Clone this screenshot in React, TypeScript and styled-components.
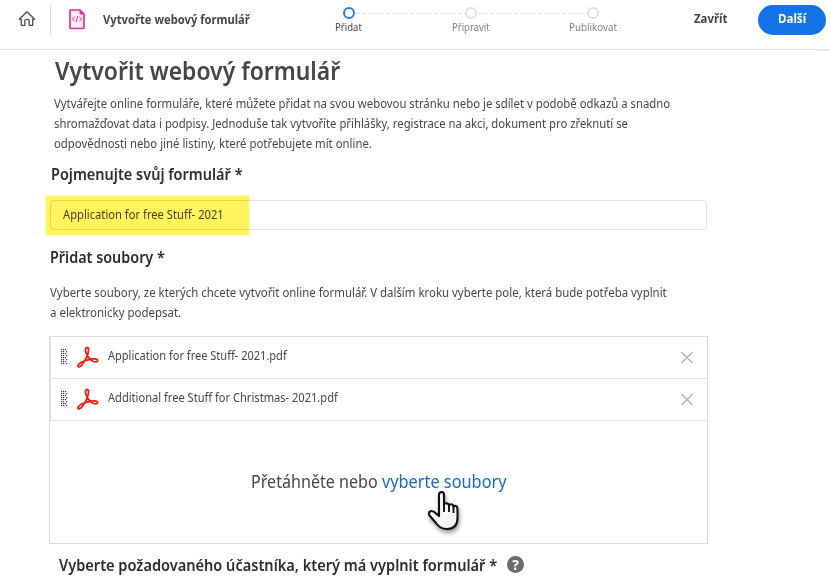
import React, { useLayoutEffect, useRef, useState } from "react";
import styled, { createGlobalStyle } from "styled-components";

const Global = createGlobalStyle`
  * { box-sizing: border-box; }
  html, body { margin: 0; background: #fff; overflow: hidden; }
  body { font-family: "Noto Sans", "Open Sans", sans-serif; color: #464646; font-size: 13.4px; }
  h1, h2, p { margin: 0; }
`;

const FitBox = styled.span<{ $w: number }>`
  display: inline-block;
  width: ${(p) => p.$w}px;
  white-space: nowrap;
  vertical-align: top;
`;
const FitInner = styled.span`
  display: inline-block;
  transform-origin: 0 50%;
  vertical-align: top;
`;

/* Condenses a run of text horizontally so that it fills the given width. */
function Fit({ w, children }: { w: number; children: React.ReactNode }) {
  const ref = useRef<HTMLSpanElement>(null);
  const [scale, setScale] = useState(1);
  useLayoutEffect(() => {
    if (ref.current) setScale(w / ref.current.offsetWidth);
  }, [w]);
  return (
    <FitBox $w={w}>
      <FitInner ref={ref} style={{ transform: `scaleX(${scale})` }}>{children}</FitInner>
    </FitBox>
  );
}

const Page = styled.div`
  width: 830px;
  height: 578px;
  overflow: hidden;
`;
const Header = styled.header`
  position: relative;
  display: flex;
  height: 50px;
  border-bottom: 1px solid #e6e6e6;
`;
const HeaderEdge = styled.i`
  position: absolute;
  right: 0;
  bottom: -2px;
  width: 13px;
  height: 1px;
  background: #e6e6e6;
`;
const HomeButton = styled.div`
  width: 51px;
  height: 30px;
  margin-top: 5px;
  padding: 5px 0 0 18px;
  border-right: 1px solid #dcdcdc;
`;
const FormIcon = styled.div`
  width: 52px;
  padding: 9px 0 0 17px;
`;
const HeaderTitle = styled.div`
  width: 224px;
  margin-top: 9px;
  font-size: 12.8px;
  font-weight: 700;
  line-height: 20px;
`;
const Steps = styled.div`
  display: flex;
  width: 365px;
  margin-left: -39.5px;
  padding-top: 7px;
`;
const Step = styled.div<{ $active?: boolean }>`
  position: relative;
  flex: 0 0 122px;
  display: flex;
  flex-direction: column;
  align-items: center;
  color: ${(p) => (p.$active ? "#464646" : "#808080")};
  font-size: 11px;
  line-height: 15px;
  &:not(:last-child)::after {
    content: "";
    position: absolute;
    left: 68px;
    top: 6px;
    width: 109px;
    height: 1px;
    background: repeating-linear-gradient(90deg, #dedede 0 4px, transparent 4px 6px);
  }
`;
const StepDot = styled.i<{ $active?: boolean }>`
  width: 12px;
  height: 12px;
  margin-bottom: 0;
  border: 2px solid ${(p) => (p.$active ? "#2680eb" : "#e1e1e1")};
  border-radius: 50%;
`;
const Actions = styled.div`
  display: flex;
  align-items: flex-start;
  margin-left: auto;
  padding: 5px 4px 0 0;
  gap: 31px;
  font-weight: 700;
  font-size: 12.8px;
`;
const CloseButton = styled.div`
  line-height: 27px;
`;
const NextButton = styled.div`
  width: 68px;
  height: 30px;
  border-radius: 15px;
  background: #1473e6;
  color: #fff;
  line-height: 27px;
  text-align: center;
`;
const Main = styled.main`
  width: 659px;
  margin-left: 49px;
  padding-top: 5px;
`;
const Title = styled.h1`
  padding-left: 6px;
  height: 38px;
  font-size: 25px;
  font-weight: 600;
  line-height: 30px;
`;
const Paragraph = styled.p<{ $indent: number; $top?: number }>`
  display: flex;
  flex-direction: column;
  padding: ${(p) => p.$top ?? 0}px 0 0 ${(p) => p.$indent}px;
  line-height: 20px;
`;
const SectionTitle = styled.h2<{ $top: number; $indent: number }>`
  display: flex;
  align-items: flex-start;
  height: 22px;
  margin-top: ${(p) => p.$top}px;
  padding-left: ${(p) => p.$indent}px;
  color: #2c2c2c;
  font-size: 16px;
  font-weight: 600;
  line-height: 23px;
`;
const NameField = styled.div`
  position: relative;
  width: 657px;
  height: 30px;
  margin: 15px 0 0 1px;
  padding-left: 12px;
  border: 1px solid #e0e0e0;
  border-radius: 4px;
  line-height: 26px;
  font-size: 13px;
`;
const Highlight = styled.i`
  position: absolute;
  left: -5px;
  top: -5px;
  width: 203px;
  height: 39px;
  background: #fff45c;
  box-shadow: 0 0 2px #fff45c;
  mix-blend-mode: multiply;
`;
const DropPanel = styled.div`
  height: 208px;
  margin-top: 14px;
  border: 1px solid #dcdcdc;
`;
const FileRow = styled.div`
  display: flex;
  height: 42px;
  border-bottom: 1px solid #e0e0e0;
  border-left: 1px solid #e0e0e0;
  line-height: 37px;
  font-size: 13px;
  svg { flex: none; }
`;
const FileName = styled.div`
  margin-left: 9.5px;
  flex: 1;
`;
const DropArea = styled.div`
  position: relative;
  display: flex;
  gap: 4px;
  padding: 47px 0 0 201px;
  font-size: 18px;
  line-height: 26px;
`;
const Link = styled.span`
  color: #1569cf;
`;
const Pointer = styled.svg`
  position: absolute;
  left: 374.5px;
  top: 67px;
  filter: drop-shadow(1px 3px 2px rgba(0, 0, 0, 0.4));
`;
const Help = styled.span`
  width: 17px;
  height: 17px;
  margin: 2px 0 0 10px;
  border-radius: 50%;
  background: #6b6b6b;
  color: #fff;
  font-size: 14px;
  font-weight: 700;
  line-height: 17px;
  text-align: center;
`;
const GripCell = styled.span`
  width: 16.5px;
  padding: 12px 0 0 1px;
  margin-left: 9px;
  line-height: 0;
`;
const PdfCell = styled.span`
  width: 22px;
  padding-top: 9px;
  line-height: 0;
`;
const RemoveCell = styled.span`
  width: 27px;
  padding-top: 14px;
  line-height: 0;
`;

const Grip = () => (
  <svg width="7" height="17" viewBox="0 0 7 17">
    {[0, 2, 4, 6, 8, 10, 12, 14].map((y) => (
      <g key={y} fill="#3c3c3c">
        <rect x="0" y={y} width="1.2" height="1.2" />
        <rect x="2" y={y} width="1.2" height="1.2" />
        <rect x={y % 4 ? 5 : 4} y={y} width="1.2" height="1.2" />
      </g>
    ))}
  </svg>
);
const Pdf = () => (
  <svg width="22" height="23" viewBox="0 0 22 23" fill="none" stroke="#f51a10" strokeWidth="1.8" strokeLinejoin="round">
    <path d="M10.1 1.5C8.2 1.5 8.1 4.5 9.2 7.2C10.6 10.8 13 13.7 16 15.2C18.5 16.4 20.8 16 20.7 14.4C20.5 12.5 15.5 12.4 10.8 13.8C6.5 15 1.4 17.2 1 19.5C.9 21.4 3.3 21.4 5.3 18.5C7.7 15.1 10.6 9.8 11.3 6.2C11.8 3.4 11.6 1.5 10.1 1.5Z" />
  </svg>
);
const Remove = () => (
  <svg width="14" height="13" viewBox="0 0 14 13" stroke="#b3b3b3" strokeWidth="1.4">
    <path d="M1.5 1L12.5 12M12.5 1L1.5 12" />
  </svg>
);

const files = [
  { name: "Application for free Stuff- 2021.pdf", w: 179 },
  { name: "Additional free Stuff for Christmas- 2021.pdf", w: 229.5 },
];
const steps = [
  { name: "Přidat", w: 27, active: true },
  { name: "Připravit", w: 38 },
  { name: "Publikovat", w: 48 },
];

export default function App() {
  return (
    <Page>
      <Global />
      <Header>
        <HomeButton>
          <svg width="18" height="17" viewBox="0 0 18 17" fill="none" stroke="#4b4b4b" strokeWidth="1.3" strokeLinejoin="round">
            <path d="M9 1.8L1.4 9.3H3.3V15.3H6.8V11.1Q6.8 9.3 9 9.3Q11.2 9.3 11.2 11.1V15.3H14.7V9.3H16.6Z" />
          </svg>
        </HomeButton>
        <FormIcon>
          <svg width="18" height="21" viewBox="0 0 18 21" fill="none" stroke="#dc3490">
            <path d="M2 1H12L16 5V18.5Q16 19.5 15 19.5H3Q2 19.5 2 18.5V2Q2 1 3 1Z" fill="#fbe9f3" strokeWidth="1.7" />
            <path d="M12 1V5H16Z" fill="#dc3490" />
            <path d="M6.7 7.8L4.3 10L6.7 12.2M11.3 7.8L13.7 10L11.3 12.2M9.8 7L8.2 13" strokeWidth="1" />
          </svg>
        </FormIcon>
        <HeaderTitle><Fit w={147}>Vytvořte webový formulář</Fit></HeaderTitle>
        <Steps>
          {steps.map((s) => (
            <Step key={s.name} $active={s.active}>
              <StepDot $active={s.active} />
              <Fit w={s.w}>{s.name}</Fit>
            </Step>
          ))}
        </Steps>
        <Actions>
          <CloseButton><Fit w={33}>Zavřít</Fit></CloseButton>
          <NextButton><Fit w={28}>Další</Fit></NextButton>
        </Actions>
        <HeaderEdge />
      </Header>
      <Main>
        <Title><Fit w={285}>Vytvořit webový formulář</Fit></Title>
        <Paragraph $indent={5}>
          <Fit w={616}>Vytvářejte online formuláře, které můžete přidat na svou webovou stránku nebo je sdílet v podobě odkazů a snadno</Fit>
          <Fit w={574}>shromažďovat data i podpisy. Jednoduše tak vytvoříte přihlášky, registrace na akci, dokument pro zřeknutí se</Fit>
          <Fit w={318}>odpovědnosti nebo jiné listiny, které potřebujete mít online.</Fit>
        </Paragraph>
        <SectionTitle $top={10} $indent={1.5}><Fit w={192}>Pojmenujte svůj formulář *</Fit></SectionTitle>
        <NameField>
          <Fit w={161}>Application for free Stuff- 2021</Fit>
          <Highlight />
        </NameField>
        <SectionTitle $top={16} $indent={0.5}><Fit w={115}>Přidat soubory *</Fit></SectionTitle>
        <Paragraph $indent={0.5} $top={14}>
          <Fit w={617}>Vyberte soubory, ze kterých chcete vytvořit online formulář. V dalším kroku vyberte pole, která bude potřeba vyplnit</Fit>
          <Fit w={131}>a elektronicky podepsat.</Fit>
        </Paragraph>
        <DropPanel>
          {files.map((f) => (
            <FileRow key={f.name}>
              <GripCell><Grip /></GripCell>
              <PdfCell><Pdf /></PdfCell>
              <FileName><Fit w={f.w}>{f.name}</Fit></FileName>
              <RemoveCell><Remove /></RemoveCell>
            </FileRow>
          ))}
          <DropArea>
            <Fit w={127}>Přetáhněte nebo</Fit>
            <Link><Fit w={125}>vyberte soubory</Fit></Link>
            <Pointer width="38" height="46" viewBox="0 0 38 46">
              <path d="M14 23V7Q14 4 16.5 4T19 7V17Q19 15 21.5 15.2T24 18Q24.5 16 26.5 16.3T28.5 19Q29.5 17.5 31 18T32.5 21V30Q32.5 41 22 41Q15 41 11 35L4.5 27.5Q3 24.5 5.5 23.2Q8 22.2 11 25.5L14 28Z" fill="#f8f8f8" stroke="#111" strokeWidth="2.1" strokeLinejoin="round" />
              <path d="M19 16V24M24 18V24M28.5 19V25" stroke="#111" strokeWidth="1.9" />
            </Pointer>
          </DropArea>
        </DropPanel>
        <SectionTitle $top={10} $indent={10}>
          <Fit w={438}>Vyberte požadovaného účastníka, který má vyplnit formulář *</Fit>
          <Help>?</Help>
        </SectionTitle>
      </Main>
    </Page>
  );
}
